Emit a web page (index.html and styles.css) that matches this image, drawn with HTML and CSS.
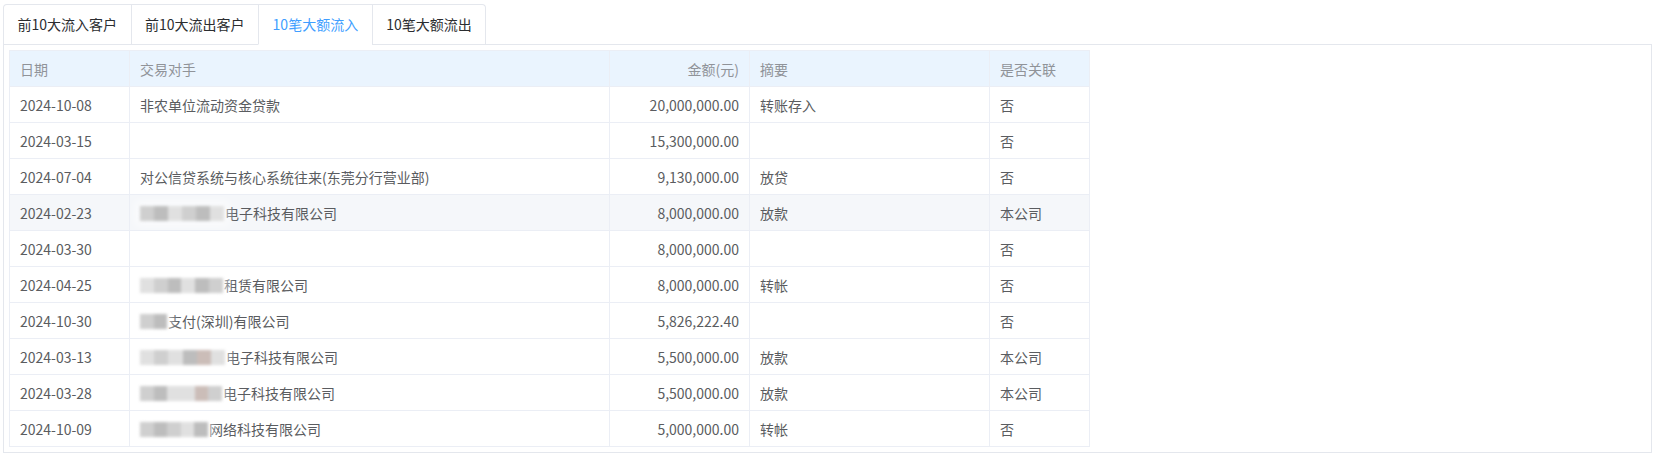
FILE: index.html
```html
<!DOCTYPE html>
<html lang="zh-CN">
<head>
<meta charset="utf-8">
<title>交易明细</title>
<link rel="stylesheet" href="styles.css">
</head>
<body>
<div class="page">
  <div class="tabs">
    <div class="tab">前10大流入客户</div>
    <div class="tab">前10大流出客户</div>
    <div class="tab active">10笔大额流入</div>
    <div class="tab">10笔大额流出</div>
  </div>
  <div class="panel">
    <table class="grid">
      <colgroup>
        <col class="c-date"><col class="c-party"><col class="c-amt"><col class="c-memo"><col class="c-rel">
      </colgroup>
      <thead>
        <tr><th>日期</th><th>交易对手</th><th class="num">金额(元)</th><th>摘要</th><th>是否关联</th></tr>
      </thead>
      <tbody>
        <tr><td>2024-10-08</td><td>非农单位流动资金贷款</td><td class="num">20,000,000.00</td><td>转账存入</td><td>否</td></tr>
        <tr><td>2024-03-15</td><td></td><td class="num">15,300,000.00</td><td></td><td>否</td></tr>
        <tr><td>2024-07-04</td><td>对公信贷系统与核心系统往来(东莞分行营业部)</td><td class="num">9,130,000.00</td><td>放贷</td><td>否</td></tr>
        <tr class="hover"><td>2024-02-23</td><td><span class="mask w84"><i></i><i class="d"></i><i class="l"></i><i></i><i class="d"></i><i class="l"></i></span>电子科技有限公司</td><td class="num">8,000,000.00</td><td>放款</td><td>本公司</td></tr>
        <tr><td>2024-03-30</td><td></td><td class="num">8,000,000.00</td><td></td><td>否</td></tr>
        <tr><td>2024-04-25</td><td><span class="mask w83"><i class="l"></i><i></i><i class="d"></i><i class="l"></i><i class="d"></i><i></i></span>租赁有限公司</td><td class="num">8,000,000.00</td><td>转帐</td><td>否</td></tr>
        <tr><td>2024-10-30</td><td><span class="mask w27"><i></i><i class="d"></i></span>支付(深圳)有限公司</td><td class="num">5,826,222.40</td><td></td><td>否</td></tr>
        <tr><td>2024-03-13</td><td><span class="mask w85"><i class="l"></i><i></i><i class="l"></i><i class="d"></i><i class="r"></i><i class="l"></i></span>电子科技有限公司</td><td class="num">5,500,000.00</td><td>放款</td><td>本公司</td></tr>
        <tr><td>2024-03-28</td><td><span class="mask w82"><i></i><i class="d"></i><i class="l"></i><i class="l"></i><i class="r"></i><i></i></span>电子科技有限公司</td><td class="num">5,500,000.00</td><td>放款</td><td>本公司</td></tr>
        <tr><td>2024-10-09</td><td><span class="mask w68"><i></i><i class="d"></i><i></i><i class="l"></i><i class="d"></i></span>网络科技有限公司</td><td class="num">5,000,000.00</td><td>转帐</td><td>否</td></tr>
      </tbody>
    </table>
  </div>
</div>
</body>
</html>
```

FILE: styles.css
```css
* { box-sizing: border-box; }
html, body { margin: 0; padding: 0; background: #fff; }
body {
  font-family: "Noto Sans CJK SC", "Noto Sans", sans-serif;
  font-size: 14px;
  color: #5a5c60;
}
.page {
  padding: 4px 7px 4px 3px;
}
.tabs {
  display: flex;
  width: max-content;
  border: 1px solid #e4e7ed;
  border-bottom: none;
  border-radius: 4px 4px 0 0;
  position: relative;
  margin-bottom: -1px;
  background: #fff;
}
.tab {
  height: 40px;
  line-height: 39px;
  padding: 0 13.5px;
  color: #2b2d30;
  border-left: 1px solid #e4e7ed;
  border-bottom: 1px solid #e4e7ed;
  white-space: nowrap;
}
.tab:first-child { border-left: none; }
.tab.active {
  color: #409eff;
  border-bottom-color: #fff;
}
.panel {
  border: 1px solid #e4e7ed;
  padding: 5px;
  height: 409px;
}
.grid {
  width: 1080px;
  table-layout: fixed;
  border-collapse: separate;
  border-spacing: 0;
  border-top: 1px solid #ebeef5;
  border-left: 1px solid #ebeef5;
}
.c-date { width: 120px; }
.c-party { width: 480px; }
.c-amt { width: 140px; }
.c-memo { width: 240px; }
.c-rel { width: 100px; }
.grid th, .grid td {
  height: 36px;
  padding: 0 10px;
  border-right: 1px solid #ebeef5;
  border-bottom: 1px solid #ebeef5;
  text-align: left;
  white-space: nowrap;
  overflow: hidden;
  vertical-align: middle;
}
.grid th {
  background: #eaf4fe;
  color: #909399;
  font-weight: normal;
}
.grid td { color: #5a5c60; }
.grid .num { text-align: right; }
.grid tr.hover td { background: #f5f7fa; }
.mask {
  display: inline-flex;
  vertical-align: middle;
  height: 15px;
  margin-right: 1px;
  margin-top: -2px;
  filter: blur(1.5px);
  box-shadow: 0 0 8px 5px rgba(255,255,255,0.6);
}
.mask i {
  flex: 1;
  background: #cfcfcf;
}
.mask i.d { background: #bdbdbd; }
.mask i.l { background: #e0e0e0; }
.mask i.r { background: #cbbdb8; }
.w84 { width: 84px; }
.w83 { width: 83px; }
.w27 { width: 27px; }
.w85 { width: 85px; }
.w82 { width: 82px; }
.w68 { width: 68px; }
```
